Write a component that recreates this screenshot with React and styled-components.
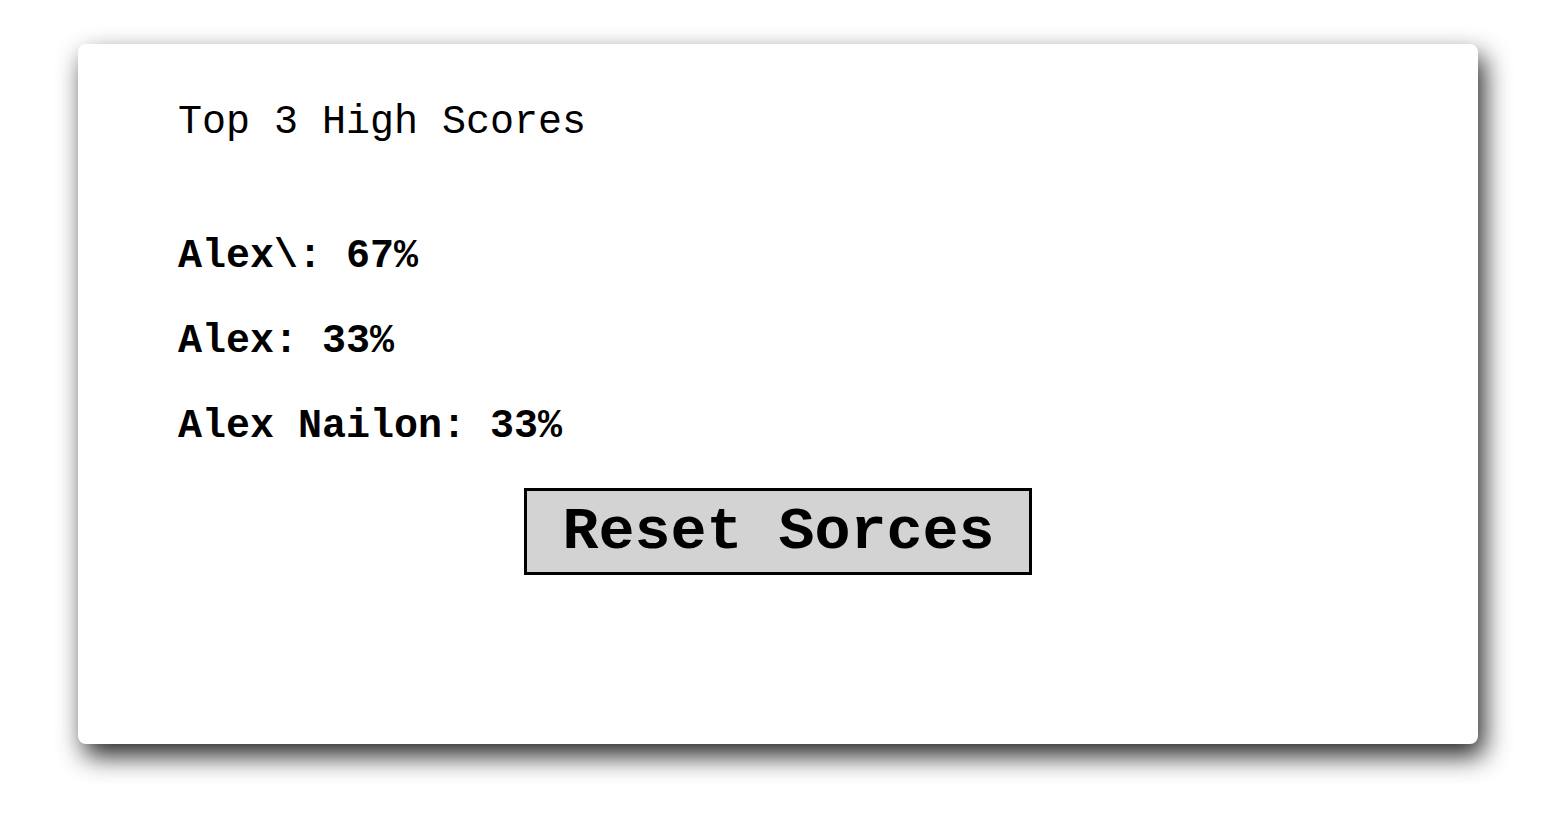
import React from "react";
import styled, { createGlobalStyle } from "styled-components";

const Global = createGlobalStyle`
  html, body { margin: 0; padding: 0; background: #ffffff; }
  body { font-family: "Liberation Mono", "Courier New", monospace; color: #000; }
`;

const Page = styled.div`
  box-sizing: border-box;
  min-height: 100vh;
  padding: 44px 0 82px 78px;
`;

const Card = styled.div`
  box-sizing: border-box;
  width: 1400px;
  height: 700px;
  background: #fff;
  border-radius: 8px;
  box-shadow: 6px 12px 26px rgba(0, 0, 0, 0.85);
  padding: 56px 100px 0 100px;
  display: flex;
  flex-direction: column;
`;

const Title = styled.h1`
  margin: 0 0 89px;
  font-family: "Liberation Mono", "Courier New", monospace;
  font-weight: normal;
  font-size: 40px;
  line-height: 45px;
`;

const ScoreList = styled.div`
  display: flex;
  flex-direction: column;
  gap: 40px;
`;

const Score = styled.p`
  margin: 0;
  font-size: 40px;
  line-height: 45px;
  font-weight: bold;
`;

const Actions = styled.div`
  display: flex;
  justify-content: center;
  margin-top: 39px;
`;

const ResetButton = styled.button`
  font-family: "Liberation Mono", "Courier New", monospace;
  font-weight: bold;
  font-size: 60px;
  line-height: 68px;
  color: #000;
  background: #d3d3d3;
  border: 3px solid #000;
  border-radius: 0;
  padding: 7px 34px 6px 35px;
  cursor: pointer;
`;

const scores = [
  { name: "Alex\\", pct: 67 },
  { name: "Alex", pct: 33 },
  { name: "Alex Nailon", pct: 33 },
];

export default function App() {
  return (
    <>
      <Global />
      <Page>
        <Card>
          <Title>Top 3 High Scores</Title>
          <ScoreList>
            {scores.map((s, i) => (
              <Score key={i}>
                {s.name}: {s.pct}%
              </Score>
            ))}
          </ScoreList>
          <Actions>
            <ResetButton>Reset Sorces</ResetButton>
          </Actions>
        </Card>
      </Page>
    </>
  );
}
